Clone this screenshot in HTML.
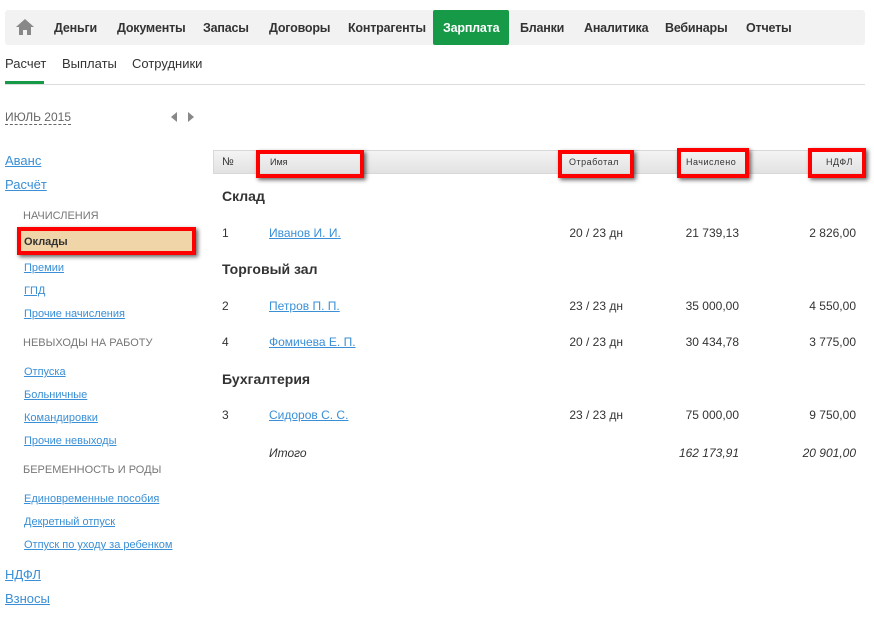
<html><head><style>
body{margin:0;width:874px;height:621px;background:#fff;font-family:"Liberation Sans",sans-serif;position:relative;overflow:hidden;color:#333}
.a{position:absolute;white-space:nowrap}
.nav{position:absolute;left:5px;top:10px;width:860px;height:35px;background:#f2f2f2;border-radius:3px}
.nav span{position:absolute;top:11px;font-size:12.5px;font-weight:bold;color:#333;letter-spacing:-0.2px}
.lnk{color:#3a8fd6;text-decoration:underline;font-size:11px}
.big{color:#3a8fd6;text-decoration:underline;font-size:13px}
.hd{font-size:11px;color:#777}
.rb{position:absolute;border:4px solid #f00;box-shadow:2px 2px 4px rgba(0,0,0,.6);box-sizing:border-box}
.td{font-size:12px;color:#333}
.g{font-size:14px;font-weight:bold;color:#333}
</style></head><body>
<div class="nav">
<svg style="position:absolute;left:11px;top:9px" width="18" height="16" viewBox="0 0 18 16"><path d="M9 0 L18 8 L15 8 L15 16 L11 16 L11 11 L7 11 L7 16 L3 16 L3 8 L0 8Z" fill="#888"/></svg>
<span style="left:49px">Деньги</span><span style="left:112px">Документы</span><span style="left:198px">Запасы</span><span style="left:264px">Договоры</span><span style="left:343px">Контрагенты</span>
<div style="position:absolute;left:428px;top:0;width:76px;height:35px;background:#169a48;border-radius:2px"></div>
<span style="left:438px;color:#fff">Зарплата</span><span style="left:515px">Бланки</span><span style="left:579px">Аналитика</span><span style="left:660px">Вебинары</span><span style="left:741px">Отчеты</span>
</div>
<div class="a" style="left:5px;top:56px;font-size:13px">Расчет</div>
<div class="a" style="left:62px;top:56px;font-size:13px">Выплаты</div>
<div class="a" style="left:132px;top:56px;font-size:13px">Сотрудники</div>
<div class="a" style="left:5px;top:84px;width:860px;height:1px;background:#ddd"></div>
<div class="a" style="left:5px;top:81px;width:39px;height:3px;background:#169a48"></div>
<div class="a" style="left:5px;top:110px;font-size:12px;color:#666;border-bottom:1px dashed #666">ИЮЛЬ 2015</div>
<div class="a" style="left:171px;top:112px;width:0;height:0;border:5px solid transparent;border-right:6px solid #888;border-left:0"></div>
<div class="a" style="left:188px;top:112px;width:0;height:0;border:5px solid transparent;border-left:6px solid #888;border-right:0"></div>
<div class="a big" style="left:5px;top:153px">Аванс</div>
<div class="a big" style="left:5px;top:177px">Расчёт</div>
<div class="a hd" style="left:23px;top:210px">НАЧИСЛЕНИЯ</div>
<div class="a" style="left:20px;top:229px;width:173px;height:25px;background:#f0d5a8"></div>
<div class="rb" style="left:17px;top:227px;width:179px;height:28px"></div>
<div class="a" style="left:24px;top:236px;font-size:11px;font-weight:bold">Оклады</div>
<div class="a lnk" style="left:24px;top:262px">Премии</div>
<div class="a lnk" style="left:24px;top:285px">ГПД</div>
<div class="a lnk" style="left:24px;top:308px">Прочие начисления</div>
<div class="a hd" style="left:23px;top:337px">НЕВЫХОДЫ НА РАБОТУ</div>
<div class="a lnk" style="left:24px;top:366px">Отпуска</div>
<div class="a lnk" style="left:24px;top:389px">Больничные</div>
<div class="a lnk" style="left:24px;top:412px">Командировки</div>
<div class="a lnk" style="left:24px;top:435px">Прочие невыходы</div>
<div class="a hd" style="left:23px;top:464px">БЕРЕМЕННОСТЬ И РОДЫ</div>
<div class="a lnk" style="left:24px;top:493px">Единовременные пособия</div>
<div class="a lnk" style="left:24px;top:516px">Декретный отпуск</div>
<div class="a lnk" style="left:24px;top:539px">Отпуск по уходу за ребенком</div>
<div class="a big" style="left:5px;top:567px">НДФЛ</div>
<div class="a big" style="left:5px;top:591px">Взносы</div>

<div class="a" style="left:213px;top:150px;width:652px;height:24px;background:linear-gradient(#f4f4f4,#e2e2e2);border:1px solid #d8d8d8;box-sizing:border-box"></div>
<div class="a" style="left:222px;top:156px;font-size:11px">№</div>
<div class="rb" style="left:256px;top:150px;width:108px;height:28px"></div>
<div class="a" style="left:270px;top:157px;font-size:9px">Имя</div>
<div class="rb" style="left:558px;top:150px;width:76px;height:28px"></div>
<div class="a" style="left:569px;top:157px;font-size:9px;letter-spacing:.5px">Отработал</div>
<div class="rb" style="left:677px;top:148px;width:72px;height:30px"></div>
<div class="a" style="left:686px;top:157px;font-size:9px;letter-spacing:.5px">Начислено</div>
<div class="rb" style="left:808px;top:148px;width:58px;height:30px"></div>
<div class="a" style="left:826px;top:157px;font-size:9px;letter-spacing:.5px">НДФЛ</div>

<div class="a g" style="left:222px;top:188px">Склад</div>
<div class="a td" style="left:222px;top:226px">1</div><div class="a big" style="left:269px;top:226px;font-size:12px">Иванов И. И.</div>
<div class="a td" style="right:251px;top:226px">20 / 23 дн</div><div class="a td" style="right:135px;top:226px">21 739,13</div><div class="a td" style="right:18px;top:226px">2 826,00</div>
<div class="a g" style="left:222px;top:261px">Торговый зал</div>
<div class="a td" style="left:222px;top:299px">2</div><div class="a big" style="left:269px;top:299px;font-size:12px">Петров П. П.</div>
<div class="a td" style="right:251px;top:299px">23 / 23 дн</div><div class="a td" style="right:135px;top:299px">35 000,00</div><div class="a td" style="right:18px;top:299px">4 550,00</div>
<div class="a td" style="left:222px;top:335px">4</div><div class="a big" style="left:269px;top:335px;font-size:12px">Фомичева Е. П.</div>
<div class="a td" style="right:251px;top:335px">20 / 23 дн</div><div class="a td" style="right:135px;top:335px">30 434,78</div><div class="a td" style="right:18px;top:335px">3 775,00</div>
<div class="a g" style="left:222px;top:371px">Бухгалтерия</div>
<div class="a td" style="left:222px;top:408px">3</div><div class="a big" style="left:269px;top:408px;font-size:12px">Сидоров С. С.</div>
<div class="a td" style="right:251px;top:408px">23 / 23 дн</div><div class="a td" style="right:135px;top:408px">75 000,00</div><div class="a td" style="right:18px;top:408px">9 750,00</div>
<div class="a td" style="left:269px;top:446px;font-style:italic">Итого</div>
<div class="a td" style="right:135px;top:446px;font-style:italic">162 173,91</div><div class="a td" style="right:18px;top:446px;font-style:italic">20 901,00</div>
</body></html>
